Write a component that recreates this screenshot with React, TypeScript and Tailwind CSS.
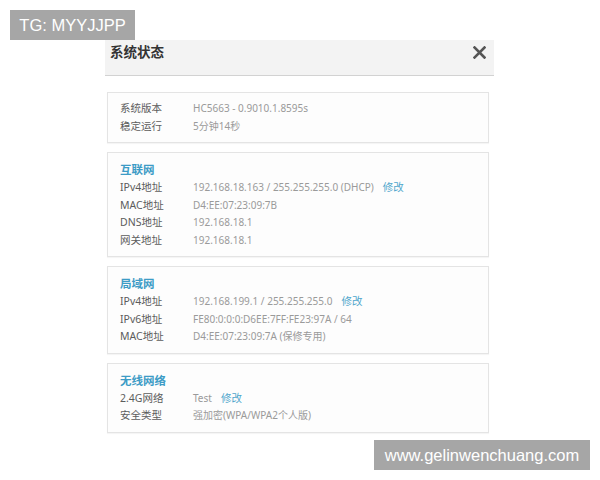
import React from 'react'

type Row = { label: string; value: string; edit?: boolean }
type Section = { title?: string; rows: Row[] }

const sections: Section[] = [
  {
    rows: [
      { label: '系统版本', value: 'HC5663 - 0.9010.1.8595s' },
      { label: '稳定运行', value: '5分钟14秒' },
    ],
  },
  {
    title: '互联网',
    rows: [
      { label: 'IPv4地址', value: '192.168.18.163 / 255.255.255.0 (DHCP)', edit: true },
      { label: 'MAC地址', value: 'D4:EE:07:23:09:7B' },
      { label: 'DNS地址', value: '192.168.18.1' },
      { label: '网关地址', value: '192.168.18.1' },
    ],
  },
  {
    title: '局域网',
    rows: [
      { label: 'IPv4地址', value: '192.168.199.1 / 255.255.255.0', edit: true },
      { label: 'IPv6地址', value: 'FE80:0:0:0:D6EE:7FF:FE23:97A / 64' },
      { label: 'MAC地址', value: 'D4:EE:07:23:09:7A (保修专用)' },
    ],
  },
  {
    title: '无线网络',
    rows: [
      { label: '2.4G网络', value: 'Test', edit: true },
      { label: '安全类型', value: '强加密(WPA/WPA2个人版)' },
    ],
  },
]

function InfoCard({ section }: { section: Section }) {
  return (
    <div className="border border-[#e4e4e4] bg-[#fdfdfd] pl-[12px] pt-[7px] pb-[7px] shadow-[0_1px_1px_rgba(0,0,0,0.04)]">
      {section.title && (
        <div className="pt-[1px] text-[11.5px] leading-[18px] font-semibold text-[#3d9cc6]">
          {section.title}
        </div>
      )}
      {section.rows.map((row) => (
        <div key={row.label} className="flex items-baseline leading-[17.5px]">
          <span className="w-[73px] shrink-0 text-[10.5px] text-[#5c5c5c]">{row.label}</span>
          <span className="text-[10px] text-[#9a9a9a]">{row.value}</span>
          {row.edit && <span className="ml-[9px] text-[10.5px] text-[#4fa6cc]">修改</span>}
        </div>
      ))}
    </div>
  )
}

export default function App() {
  return (
    <div
      className="relative h-[480px] w-[600px] overflow-hidden bg-white"
      style={{ fontFamily: '"Noto Sans", "Noto Sans CJK SC", sans-serif' }}
    >
      {/* Dialog */}
      <div className="ml-[105px] w-[389px] pt-[40px]">
        <div className="flex h-[36px] items-start justify-between border-b border-[#d2d2d2] bg-[#f3f3f3] pl-[5px] pr-[8px] pt-[3px]">
          <span className="text-[13.5px] leading-[18px] font-semibold text-[#333]">系统状态</span>
          <svg width="13" height="13" viewBox="0 0 13 13" className="mt-[3px]">
            <path d="M1.5 1.5 L11.5 11.5 M11.5 1.5 L1.5 11.5" stroke="#555" strokeWidth="2.6" strokeLinecap="square" />
          </svg>
        </div>
        <div className="flex flex-col gap-[9px] pl-[2px] pr-[5px] pt-[16px]">
          {sections.map((s, i) => (
            <InfoCard key={i} section={s} />
          ))}
        </div>
      </div>

      {/* Watermarks */}
      <div
        className="absolute left-[10px] top-[10px] flex h-[30px] w-[125px] items-center justify-center bg-[#a6a6a6] text-[16.5px] text-white"
        style={{ fontFamily: '"Liberation Sans", Arial, sans-serif' }}
      >
        TG: MYYJJPP
      </div>
      <div
        className="absolute left-[374px] top-[440px] flex h-[30px] w-[216px] items-center justify-center bg-[#a6a6a6] text-[16.5px] text-white"
        style={{ fontFamily: '"Liberation Sans", Arial, sans-serif' }}
      >
        www.gelinwenchuang.com
      </div>
    </div>
  )
}
